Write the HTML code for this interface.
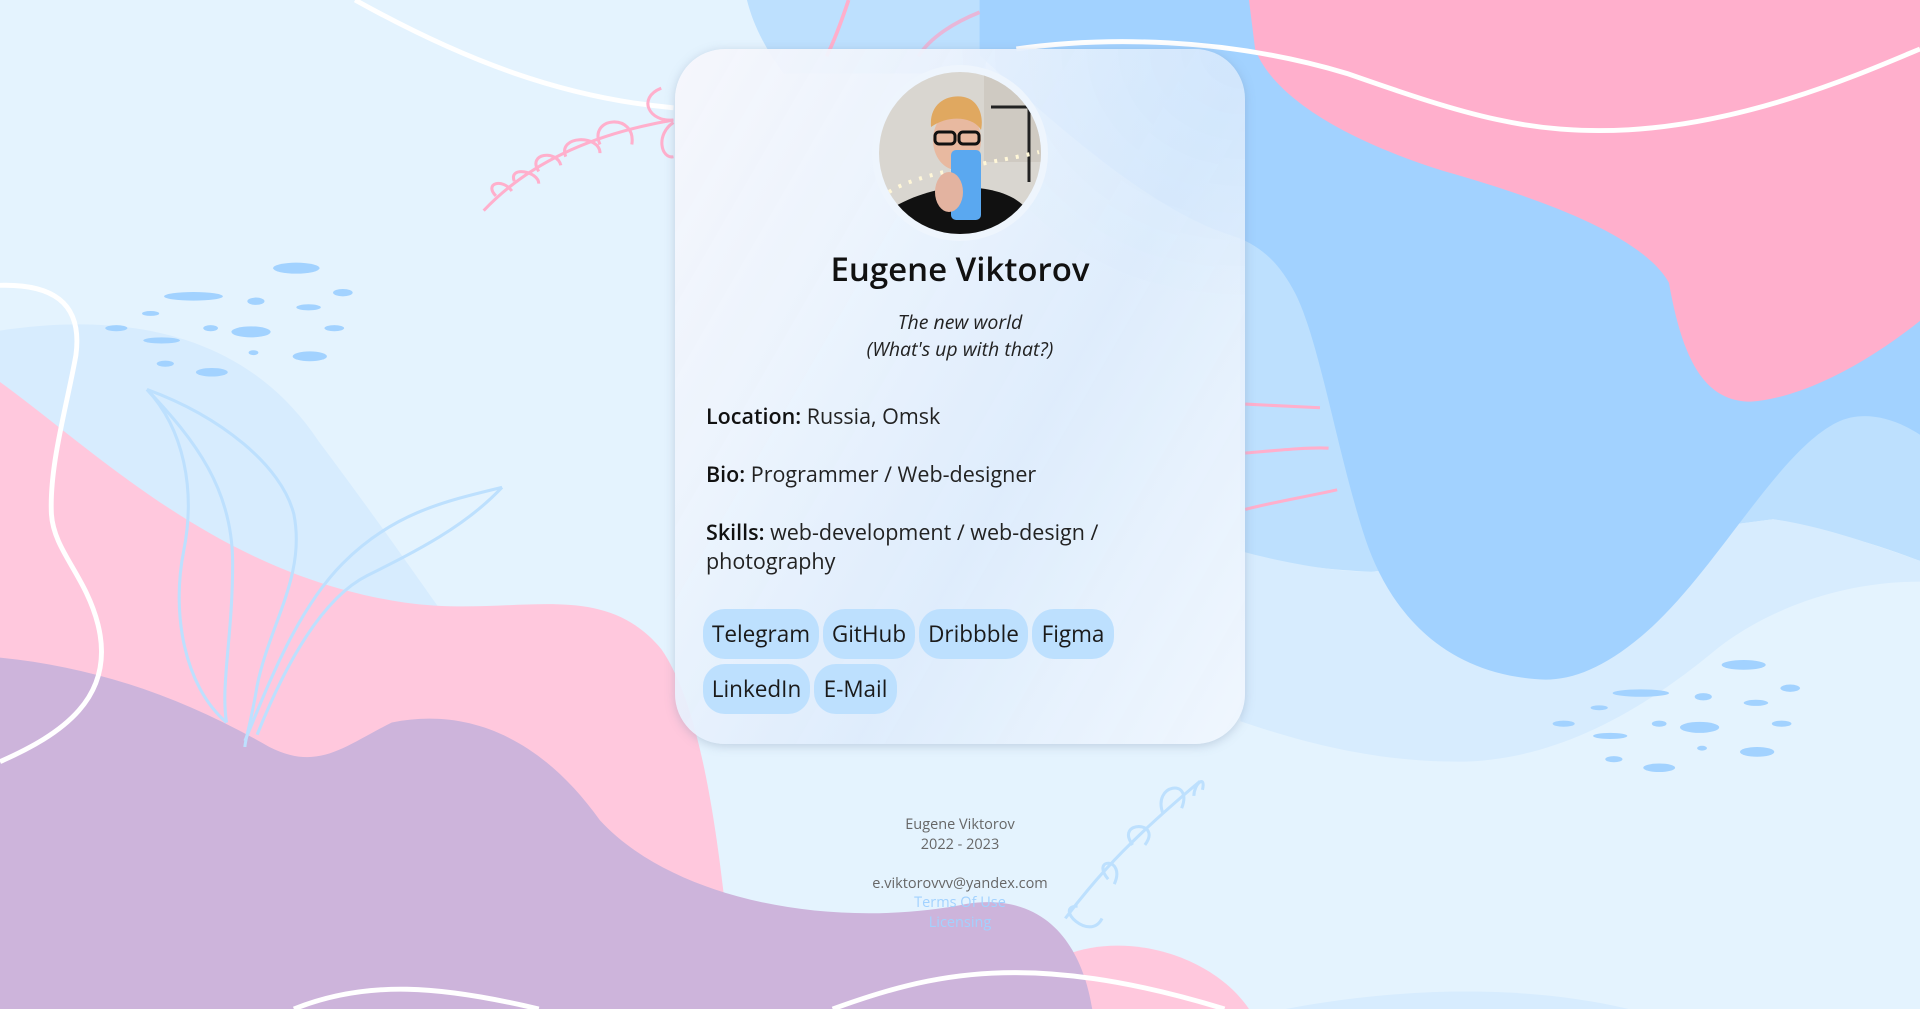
<!DOCTYPE html>
<html><head><meta charset="utf-8"><style>
html,body{margin:0;padding:0;width:1920px;height:1009px;overflow:hidden;background:#e4f3fe;font-family:"Open Sans","Liberation Sans",sans-serif;}
#bg{position:absolute;left:0;top:0;width:1920px;height:1009px;}
.card{position:absolute;left:675px;top:49px;width:570px;height:695px;border-radius:50px;background:radial-gradient(ellipse 300px 260px at 100% 0%,rgba(200,226,253,0.5),rgba(200,226,253,0) 100%),linear-gradient(120deg,rgba(246,246,252,0.96) 0%,rgba(234,242,253,0.93) 35%,rgba(222,236,252,0.92) 60%,rgba(240,246,254,0.95) 100%);box-shadow:0 2px 10px rgba(120,140,170,0.35);box-sizing:border-box;}
.av{position:absolute;left:872px;top:65px;width:176px;height:176px;border-radius:50%;background:#eef5fd;}
.av svg{position:absolute;left:7px;top:7px;}
.name{position:absolute;left:675px;width:570px;top:246px;text-align:center;font-size:33px;font-weight:600;color:#111;}
.tag{position:absolute;left:675px;width:570px;top:308px;text-align:center;font-size:19.5px;font-style:italic;line-height:27px;color:#222;}
.row{position:absolute;left:706px;font-size:21.5px;color:#222;line-height:29px;width:470px;}
.row b{color:#111;font-weight:600;}
.btn{position:absolute;height:50px;border-radius:22px;background:#bde0fe;font-size:22.5px;line-height:50px;text-align:center;color:#1a1a1a;}
.foot{position:absolute;left:760px;width:400px;text-align:center;font-size:14.5px;color:#666;line-height:19.5px;}
.foot .l{color:#a2d2ff;}
</style></head><body>
<svg id="bg" viewBox="0 0 1568 824" preserveAspectRatio="none">
<rect width="1568" height="824" fill="#e4f3fe"/>
<path d="M0,270 C100,255 200,270 260,360 C320,440 360,500 390,540 L0,560 Z" fill="#d7ecfe"/>
<path d="M610,0 L805,0 L805,60 L640,60 C625,40 615,20 610,0 Z" fill="#bde0fe"/>
<path d="M1013,190 L1568,190 L1568,458 C1520,440 1480,430 1448,424 L1120,467 C1080,465 1040,460 1013,450 Z" fill="#bde0fe"/>
<path d="M1013,450 C1050,460 1090,467 1120,467 L1448,424 C1490,430 1530,445 1568,458 L1568,475 C1500,475 1440,500 1402,530 C1330,590 1260,622 1190,622 C1120,622 1060,605 1013,589 Z" fill="#d7ecfe"/>
<path d="M800,0 L1568,0 L1568,355 C1545,340 1520,335 1500,345 C1450,370 1400,470 1340,520 C1310,545 1285,555 1262,555 C1180,552 1135,500 1115,440 C1092,370 1078,280 1058,240 C1045,215 1030,200 1005,192 C950,175 880,120 800,45 Z" fill="#a2d2ff"/>
<path d="M1020,0 L1568,0 L1568,262 C1520,300 1470,325 1430,328 C1395,328 1375,300 1363,231 C1340,190 1250,160 1180,140 C1100,115 1040,80 1025,40 Z" fill="#ffafcc"/>
<path d="M0,312 C80,370 180,470 330,492 C420,505 490,470 540,530 C575,580 590,700 600,824 L0,824 Z" fill="#ffc8dd"/>
<path d="M870,780 C920,760 990,780 1020,824 L880,824 Z" fill="#ffc8dd"/>
<path d="M0,537 C80,545 150,570 220,610 C260,630 280,610 320,590 C380,578 440,600 490,670 C550,735 680,760 790,738 C860,728 885,780 892,824 L0,824 Z" fill="#cdb4db"/>
<path d="M1050,824 C1150,805 1250,805 1330,824 Z" fill="#d7ecfe"/>
<g fill="none" stroke="#ffafcc" stroke-width="3">
<path d="M693,0 C688,15 682,32 675,46"/>
<path d="M800,10 C780,18 760,30 750,46" stroke="#e8b6d8"/>
</g>
<g fill="none" stroke="#fff" stroke-width="4">
<path d="M290,0 C380,50 460,80 550,88"/>
<path d="M830,40 C900,30 1000,30 1100,60 C1200,95 1250,110 1330,106 C1430,100 1520,60 1568,40"/>
<path d="M0,233 C40,232 68,245 62,290 C55,330 40,380 42,420 C44,450 70,470 80,510 C95,570 50,600 0,622"/>
<path d="M240,824 C300,800 360,805 440,824"/>
<path d="M680,824 C760,795 840,775 1000,824"/>
</g>
<g fill="none" stroke="#ffafcc" stroke-width="2.5">
<path d="M395,172 C430,135 480,110 550,98"/>
<path d="M405,160 C395,150 410,145 418,156 M420,148 C415,135 440,140 440,150 M440,140 C430,125 455,122 458,135 M462,128 C455,110 490,110 490,125 M490,118 C480,95 520,92 516,118"/>
<path d="M540,72 C520,80 530,100 550,98 M550,100 C535,110 540,130 550,128"/>
</g>
<g fill="none" stroke="#ffafcc" stroke-width="2.5">
<path d="M1017,330 L1078,333 M1017,370 C1040,368 1070,365 1085,366 M1017,416 C1040,410 1070,405 1092,400"/>
</g>
<g fill="none" stroke="#bde0fe" stroke-width="2.5">
<path d="M120,318 C180,340 230,380 240,420 C250,470 220,510 210,560 C205,590 200,605 200,610"/>
<path d="M120,318 C160,360 190,400 190,460 C190,520 180,560 185,590"/>
<path d="M120,318 C150,350 160,400 150,450 C140,500 150,560 185,590"/>
<path d="M410,398 C360,410 320,420 280,460 C240,500 215,570 200,605"/>
<path d="M410,398 C380,430 340,450 300,470 C260,490 230,550 210,600"/>
<path d="M870,750 C900,710 930,680 980,638 M905,718 C890,700 920,700 910,722 M925,690 C910,670 950,670 935,690 M950,665 C940,640 975,635 965,660 M975,650 C975,640 985,632 982,645 M880,740 C860,740 890,770 900,750"/>
</g>
<g fill="#a2d2ff">
<ellipse cx="242" cy="219" rx="19" ry="4.5"/><ellipse cx="158" cy="242" rx="24" ry="3.5"/><ellipse cx="209" cy="246" rx="7" ry="3"/><ellipse cx="252" cy="251" rx="10" ry="2.5"/><ellipse cx="280" cy="239" rx="8" ry="3"/>
<ellipse cx="123" cy="256" rx="7" ry="2"/><ellipse cx="95" cy="268" rx="9" ry="2.5"/><ellipse cx="172" cy="268" rx="6" ry="2.5"/><ellipse cx="205" cy="271" rx="16" ry="4.5"/><ellipse cx="273" cy="268" rx="8" ry="2.5"/>
<ellipse cx="132" cy="278" rx="15" ry="2.5"/><ellipse cx="207" cy="288" rx="4" ry="2"/><ellipse cx="253" cy="291" rx="14" ry="4"/><ellipse cx="135" cy="297" rx="7" ry="2.5"/><ellipse cx="173" cy="304" rx="13" ry="3.5"/>
<ellipse cx="1424" cy="543" rx="18" ry="4"/><ellipse cx="1340" cy="566" rx="23" ry="3"/><ellipse cx="1391" cy="569" rx="7" ry="3"/><ellipse cx="1434" cy="574" rx="10" ry="2.5"/><ellipse cx="1462" cy="562" rx="8" ry="3"/>
<ellipse cx="1306" cy="578" rx="7" ry="2"/><ellipse cx="1277" cy="591" rx="9" ry="2.5"/><ellipse cx="1355" cy="591" rx="6" ry="2.5"/><ellipse cx="1388" cy="594" rx="16" ry="4.5"/><ellipse cx="1455" cy="591" rx="8" ry="2.5"/>
<ellipse cx="1315" cy="601" rx="14" ry="2.5"/><ellipse cx="1390" cy="611" rx="4" ry="2"/><ellipse cx="1435" cy="614" rx="14" ry="4"/><ellipse cx="1318" cy="620" rx="7" ry="2.5"/><ellipse cx="1355" cy="627" rx="13" ry="3.5"/>
</g>
</svg>
<div class="card"></div>
<div class="av"><svg width="162" height="162" viewBox="0 0 162 162">
<defs><clipPath id="c"><circle cx="81" cy="81" r="81"/></clipPath></defs>
<g clip-path="url(#c)">
<rect width="162" height="162" fill="#d9d6d0"/>
<rect x="105" y="0" width="57" height="90" fill="#cfcac2"/>
<path d="M112,35 L150,35 L150,110" stroke="#222" stroke-width="3" fill="none"/>
<path d="M10,120 C40,100 120,90 160,80" stroke="#fff7d8" stroke-width="4" stroke-dasharray="3 8" fill="none"/>
<path d="M0,162 L15,135 C40,120 70,115 81,115 C100,115 135,118 150,140 L162,162 Z" fill="#111"/>
<ellipse cx="78" cy="68" rx="24" ry="30" fill="#e8b9a0"/>
<path d="M52,55 C50,30 70,22 85,25 C100,28 105,45 102,58 C95,45 70,42 52,55 Z" fill="#e0a860"/>
<rect x="56" y="60" width="20" height="12" rx="4" fill="none" stroke="#111" stroke-width="3"/>
<rect x="80" y="60" width="20" height="12" rx="4" fill="none" stroke="#111" stroke-width="3"/>
<rect x="72" y="78" width="30" height="70" rx="5" fill="#5aa8f0"/>
<ellipse cx="70" cy="120" rx="14" ry="20" fill="#e3b3a0"/>
</g></svg></div>
<div class="name">Eugene Viktorov</div>
<div class="tag">The new world<br>(What's up with that?)</div>
<div class="row" style="top:402px"><b>Location:</b> Russia, Omsk</div>
<div class="row" style="top:460px"><b>Bio:</b> Programmer / Web-designer</div>
<div class="row" style="top:518px"><b>Skills:</b> web-development / web-design / photography</div>
<div class="btn" style="left:703px;top:609px;width:116px">Telegram</div>
<div class="btn" style="left:823px;top:609px;width:92px">GitHub</div>
<div class="btn" style="left:919px;top:609px;width:109px">Dribbble</div>
<div class="btn" style="left:1032px;top:609px;width:82px">Figma</div>
<div class="btn" style="left:703px;top:664px;width:107px">LinkedIn</div>
<div class="btn" style="left:814px;top:664px;width:83px">E-Mail</div>
<div class="foot" style="top:815px">Eugene Viktorov<br>2022 - 2023<br><br>e.viktorovvv@yandex.com<br><span class="l">Terms Of Use</span><br><span class="l">Licensing</span></div>
</body></html>
